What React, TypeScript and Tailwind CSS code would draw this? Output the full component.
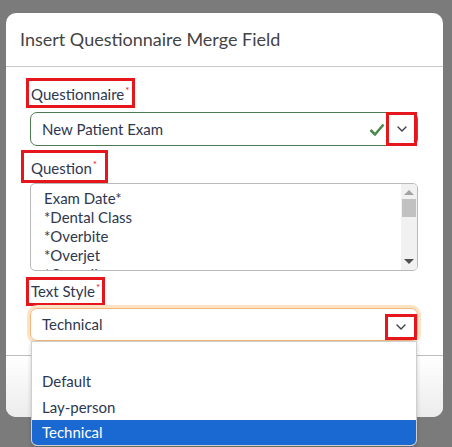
const font = { fontFamily: "Lato, 'Open Sans', sans-serif" };

const Chevron = () => (
  <svg width="10" height="6" viewBox="0 0 10 6" fill="none">
    <path d="M1 1l4 4 4-4" stroke="#3a3f4a" strokeWidth="1.4" strokeLinecap="round" strokeLinejoin="round" />
  </svg>
);

const Label = ({ text, className }: { text: string; className: string }) => (
  <div className={`self-start border-[3px] border-[#e5161c] text-[15px] leading-none text-[#2e3750] ${className}`}>
    {text}
    <span className="relative -top-[6px] ml-[1px] text-[10px] text-[#e5161c]">*</span>
  </div>
);

const questions = ["Exam Date*", "*Dental Class", "*Overbite", "*Overjet", "*Overall"];

export default function App() {
  return (
    <div className="relative h-[447px] w-[452px] overflow-hidden bg-[#7b7b7b] pl-[6px] pt-[13px]" style={font}>
      <div className="flex h-[404px] w-[437px] flex-col overflow-hidden rounded-[10px] bg-white">
        <div className="flex h-[54px] shrink-0 items-center border-b border-[#c8c8c8] pl-[14px] text-[18px] text-[#444]">
          Insert Questionnaire Merge Field
        </div>

        <div className="flex h-[288px] shrink-0 flex-col pr-[25px]">
          <Label text="Questionnaire" className="ml-[20px] mt-[11px] h-[30px] px-[2px] pt-[6px]" />

          <div className="ml-[24px] mt-[4px] flex h-[34px] items-center rounded-[7px] border border-[#4d7a52] pl-[11px] text-[15px] text-[#2e3750]">
            <span className="flex-1">New Patient Exam</span>
            <svg width="16" height="13" viewBox="0 0 16 13" className="mr-[1px]">
              <path d="M1.5 7l4.5 4.5 8.5-10" stroke="#4e8a4f" strokeWidth="2.6" fill="none" strokeLinejoin="round" />
            </svg>
            <div className="flex h-[34px] w-[31px] items-center justify-center border-[3px] border-[#e5161c]">
              <Chevron />
            </div>
          </div>

          <Label text="Question" className="ml-[15px] mt-[4px] h-[33px] pl-[7px] pr-[8px] pt-[8px]" />

          <div className="ml-[24px] flex h-[88px] overflow-hidden rounded-[5px] border border-[#b9b9b9]">
            <div className="flex-1 pl-[13px] pt-[5px] text-[15px] leading-[19px] text-[#2e3750]">
              {questions.map((q) => (
                <div key={q}>{q}</div>
              ))}
            </div>
            <div className="flex w-[16px] flex-col items-center bg-[#f1f1f1]">
              <div className="mt-[6px] h-0 w-0 border-x-[5px] border-b-[5px] border-x-transparent border-b-[#a3a3a3]" />
              <div className="mt-[4px] h-[18px] w-[14px] bg-[#c1c1c1]" />
              <div className="flex-1" />
              <div className="mb-[6px] h-0 w-0 border-x-[5px] border-t-[5px] border-x-transparent border-t-[#505050]" />
            </div>
          </div>

          <Label text="Text Style" className="ml-[20px] mt-[6px] h-[29px] px-[2px] pt-[4px]" />

          <div className="ml-[24px] mt-[2px] flex h-[33px] items-center rounded-[7px] border border-[#f3b57a] pl-[11px] text-[15px] text-[#2e3750] shadow-[0_0_0_3px_#fde3c4]">
            <span className="flex-1">Technical</span>
            <div className="flex h-[26px] w-[32px] items-center justify-center self-end border-[3px] border-[#e5161c]">
              <Chevron />
            </div>
          </div>
        </div>

        <div className="flex-1 border-t border-[#bdbdbd] bg-gradient-to-b from-white to-[#ececec]" />
      </div>

      <div className="absolute left-[31px] top-[341px] w-[386px] overflow-hidden rounded-b-[6px] border border-[#cfcfcf] bg-white text-[15px] text-[#2e3750] shadow-[0_2px_4px_rgba(0,0,0,0.2)]">
        <div className="h-[26px]" />
        <div className="flex h-[26px] items-center pl-[10px]">Default</div>
        <div className="flex h-[26px] items-center pl-[10px]">Lay-person</div>
        <div className="flex h-[25px] items-center bg-[#1a68d1] pl-[10px] text-white">Technical</div>
      </div>
    </div>
  );
}
